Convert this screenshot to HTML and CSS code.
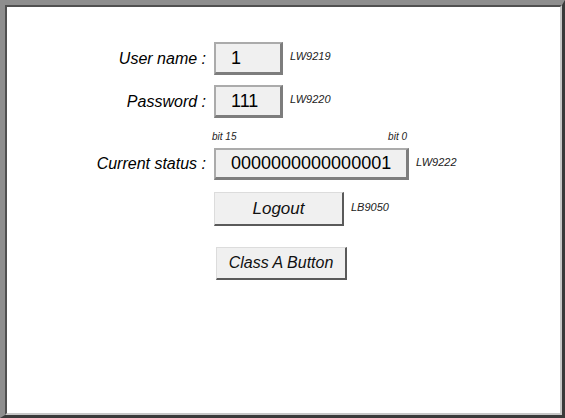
FILE: index.html
```html
<!DOCTYPE html>
<html>
<head>
<meta charset="utf-8">
<link rel="stylesheet" href="styles.css">
</head>
<body>
<div class="frame">
  <div class="screen">
    <div class="row">
      <span class="label">User name :</span>
      <div class="field small">1</div>
      <span class="tag">LW9219</span>
    </div>
    <div class="row r2">
      <span class="label">Password :</span>
      <div class="field small">111</div>
      <span class="tag">LW9220</span>
    </div>
    <div class="bits"><span>bit 15</span><span>bit 0</span></div>
    <div class="row r3">
      <span class="label">Current status :</span>
      <div class="field wide">0000000000000001</div>
      <span class="tag">LW9222</span>
    </div>
    <div class="row r4">
      <button class="btn logout">Logout</button>
      <span class="tag">LB9050</span>
    </div>
    <div class="row r5">
      <button class="btn classa">Class A Button</button>
    </div>
  </div>
</div>
</body>
</html>
```
FILE: styles.css
```css
html, body {
  margin: 0;
  padding: 0;
  background: #ffffff;
}
body {
  font-family: "Liberation Sans", Arial, sans-serif;
  color: #000;
}
.frame {
  box-sizing: border-box;
  width: 565px;
  height: 418px;
  border-style: solid;
  border-width: 5px 3px 3px 5px;
  border-color: #8e8e8e #3a3a3a #3a3a3a #8e8e8e;
}
.screen {
  box-sizing: border-box;
  height: 100%;
  background: #fff;
  border-style: solid;
  border-width: 2px;
  border-color: #505050 #c8c8c8 #c8c8c8 #505050;
  padding-top: 35px;
}
.row {
  display: flex;
  align-items: center;
}
.label {
  width: 199px;
  margin-right: 8px;
  text-align: right;
  font-style: italic;
  font-size: 16px;
  white-space: nowrap;
}
.field {
  box-sizing: border-box;
  height: 33px;
  display: flex;
  align-items: center;
  padding-left: 15px;
  background: #f0f0f0;
  border-style: solid;
  border-width: 2px 3px 3px 2px;
  border-color: #ababab #7d7d7d #7d7d7d #ababab;
  font-size: 18px;
}
.small { width: 69px; }
.wide { width: 195px; height: 32px; }
.tag {
  margin-left: 7px;
  margin-bottom: 5px;
  font-style: italic;
  font-size: 11px;
  color: #222;
}
.r2 { margin-top: 10px; }
.bits {
  margin-top: 13px;
  margin-left: 205px;
  width: 195px;
  display: flex;
  justify-content: space-between;
  font-style: italic;
  font-size: 10px;
  line-height: 12px;
  color: #222;
}
.r3 { margin-top: 5px; }
.r4 { margin-top: 12px; padding-left: 207px; }
.r5 { margin-top: 21px; padding-left: 209px; }
.btn {
  box-sizing: border-box;
  margin: 0;
  padding: 0;
  background: #f0f0f0;
  border-style: solid;
  border-width: 1px 2px 2px 1px;
  border-color: #dcdcdc #5a5a5a #5a5a5a #dcdcdc;
  font-family: "Liberation Sans", Arial, sans-serif;
  font-style: italic;
  font-size: 16px;
  color: #111;
}
.logout { width: 130px; height: 34px; font-size: 17px; }
.classa { width: 131px; height: 33px; }
```
